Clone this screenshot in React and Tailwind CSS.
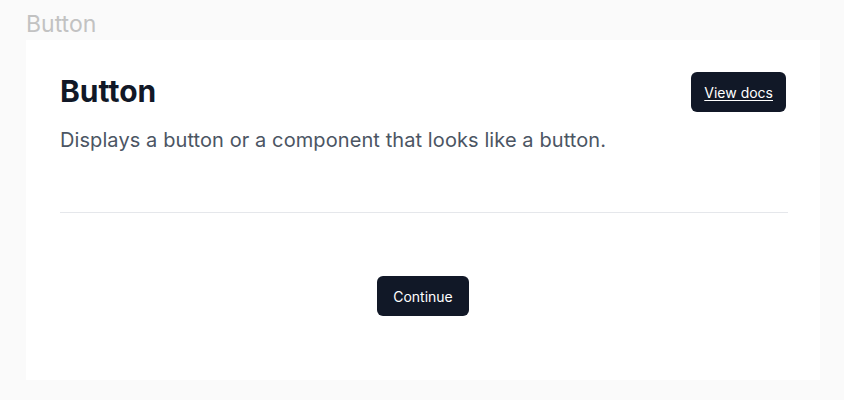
export default function App() {
  return (
    <div className="min-h-[400px] w-full bg-[#fafafa] px-[26px] pt-[8px] pb-[20px]" style={{ fontFamily: 'Inter, "Noto Sans", sans-serif' }}>
      <div className="text-[23px] leading-[32px] text-[#c2c2c2] h-[32px]">Button</div>
      <div className="bg-white w-[794px] h-[340px] px-[34px] pt-[32px] flex flex-col">
        <div className="flex items-start justify-between">
          <h1 className="text-[30px] leading-[36px] font-bold text-[#111827] pt-[1px]">Button</h1>
          <button className="h-[40px] px-[13px] rounded-md bg-[#111827] text-white text-[14px] font-normal underline underline-offset-2">View docs</button>
        </div>
        <p className="mt-[14px] text-[20px] leading-[28px] tracking-[0.09px] text-[#4b5563]">Displays a button or a component that looks like a button.</p>
        <div className="mt-[58px] h-px bg-[#e5e7eb] w-[728px]"></div>
        <div className="flex justify-center pt-[63px]">
          <button className="h-[40px] px-[16px] rounded-md bg-[#111827] text-white text-[14px] font-normal">Continue</button>
        </div>
      </div>
    </div>
  );
}
